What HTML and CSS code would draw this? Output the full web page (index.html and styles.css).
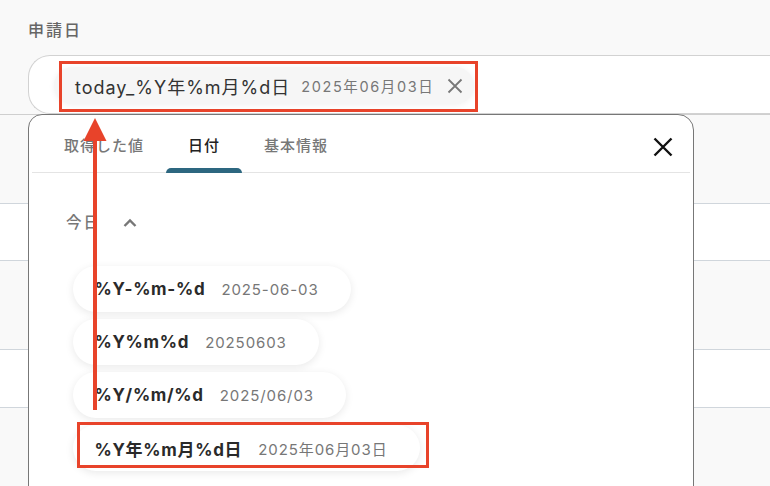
FILE: index.html
```html
<!DOCTYPE html>
<html lang="ja">
<head>
<meta charset="utf-8">
<link rel="stylesheet" href="styles.css">
</head>
<body>
<div class="page">
  <div class="label">申請日</div>
  <div class="field">
    <div class="chip">
      <span class="chip-key">today_%Y年%m月%d日</span>
      <span class="chip-val">2025年06月03日</span>
      <svg class="chip-x" width="16" height="16" viewBox="0 0 16 16"><path d="M1.5 1.5L14.5 14.5M14.5 1.5L1.5 14.5" stroke="#777" stroke-width="1.8" fill="none"/></svg>
    </div>
  </div>
  <div class="rows">
    <div class="row r1"></div>
    <div class="row r2"></div>
    <div class="row r3"></div>
    <div class="row r4"></div>
    <div class="row r5"></div>
  </div>

  <div class="popup">
    <div class="tabbar">
      <div class="tab">取得した値</div>
      <div class="tab active">日付</div>
      <div class="tab">基本情報</div>
      <svg class="close" width="20" height="20" viewBox="0 0 20 20"><path d="M1.5 1.5L18.5 18.5M18.5 1.5L1.5 18.5" stroke="#111" stroke-width="2.4" fill="none"/></svg>
    </div>
    <div class="section">
      <span>今日</span>
      <svg class="chev" width="14" height="10" viewBox="0 0 14 10"><path d="M1.5 8L7 2.5L12.5 8" stroke="#777" stroke-width="2.4" fill="none"/></svg>
    </div>
    <div class="pills">
      <div class="pill"><span class="pk">%Y-%m-%d</span><span class="pv">2025-06-03</span></div>
      <div class="pill"><span class="pk">%Y%m%d</span><span class="pv">20250603</span></div>
      <div class="pill"><span class="pk">%Y/%m/%d</span><span class="pv">2025/06/03</span></div>
      <div class="pill"><span class="pk">%Y年%m月%d日</span><span class="pv">2025年06月03日</span></div>
    </div>
  </div>

  <div class="hl hl1"></div>
  <div class="hl hl2"></div>
  <svg class="arrow" width="30" height="300" viewBox="0 0 30 300"><path d="M15 20V292" stroke="#e8432a" stroke-width="4"/><path d="M15 0L3.5 23H26.5Z" fill="#e8432a"/></svg>
</div>
</body>
</html>
```
FILE: styles.css
```css
* { box-sizing: border-box; }
html, body { margin: 0; padding: 0; }
body {
  background: #f9f9f9;
  font-family: "Inter", "Noto Sans CJK JP", sans-serif;
  width: 770px;
  height: 486px;
  overflow: hidden;
}
.page { position: relative; width: 770px; height: 486px; overflow: hidden; }
.label {
  padding: 19px 0 0 28px;
  height: 55px;
  font-size: 16px;
  font-weight: 500;
  letter-spacing: 2px;
  color: #666;
  line-height: 22px;
}
.field {
  margin-left: 28px;
  height: 59px;
  background: #fff;
  border: 1px solid #d2d2d2;
  border-right: none;
  border-radius: 22px 0 0 22px;
  padding: 11px 0 0 25px;
}
.chip {
  display: inline-flex;
  align-items: center;
  height: 37px;
  padding: 0 11px 0 21px;
  background: #f6f6f6;
  border-radius: 19px;
  box-shadow: 0 1px 6px rgba(0,0,0,0.06);
}
.chip-key { font-size: 18px; color: #333; letter-spacing: 1px; }
.chip-val { font-size: 14.5px; color: #777; margin-left: 11px; letter-spacing: 1.6px; }
.chip-x { margin-left: 13px; }
.rows { display: flex; flex-direction: column; }
.row { border-top: 1px solid #d0d6dc; }
.r1 { height: 89px; background: #f9f9f9; border-top-color: #cfcfcf; }
.r2 { height: 57px; background: #fff; }
.r3 { height: 89px; background: #f9f9f9; }
.r4 { height: 58px; background: #fff; }
.r5 { height: 100px; background: #f9f9f9; }

.popup {
  position: absolute;
  left: 28px;
  top: 114px;
  width: 666px;
  height: 400px;
  background: #fff;
  border: 1.5px solid #777;
  border-radius: 14px 16px 0 0;
}
.tabbar {
  position: relative;
  display: flex;
  margin: 0 3px;
  padding-left: 10px;
  height: 58px;
  border-bottom: 1px solid #e4e4e4;
}
.tab {
  padding: 0 22px;
  font-size: 15px;
  font-weight: 500;
  letter-spacing: 1px;
  color: #777;
  line-height: 62px;
  position: relative;
}
.tab.active { color: #222; }
.tab.active::after {
  content: "";
  position: absolute;
  left: 0; right: 0; bottom: -1px;
  height: 5px;
  background: #2d6780;
  border-radius: 5px 5px 0 0;
}
.close { position: absolute; right: 17px; top: 22px; }
.section {
  display: flex;
  align-items: flex-start;
  padding: 39px 0 0 37px;
  height: 93px;
  font-size: 15.5px;
  font-weight: 500;
  letter-spacing: 2px;
  line-height: 22px;
  color: #777;
}
.chev { margin-left: 22px; margin-top: 6px; }
.pills {
  display: flex;
  flex-direction: column;
  align-items: flex-start;
  gap: 7px;
  padding-left: 43.5px;
}
.pill {
  display: flex;
  align-items: center;
  height: 46px;
  padding: 0 32px 0 22px;
  background: #fff;
  border-radius: 23px;
  box-shadow: 0 2px 9px rgba(0,0,0,0.09);
}
.pk { font-size: 17px; font-weight: 700; color: #2a2a2a; letter-spacing: 0.7px; }
.pv { font-size: 15px; color: #777; margin-left: 16px; letter-spacing: 0.9px; }

.hl {
  position: absolute;
  border: 3.5px solid #e8432a;
}
.hl1 { left: 59px; top: 61px; width: 419px; height: 51px; }
.hl2 { left: 77px; top: 422px; width: 352px; height: 46px; }
.arrow { position: absolute; left: 80px; top: 118px; }
```
